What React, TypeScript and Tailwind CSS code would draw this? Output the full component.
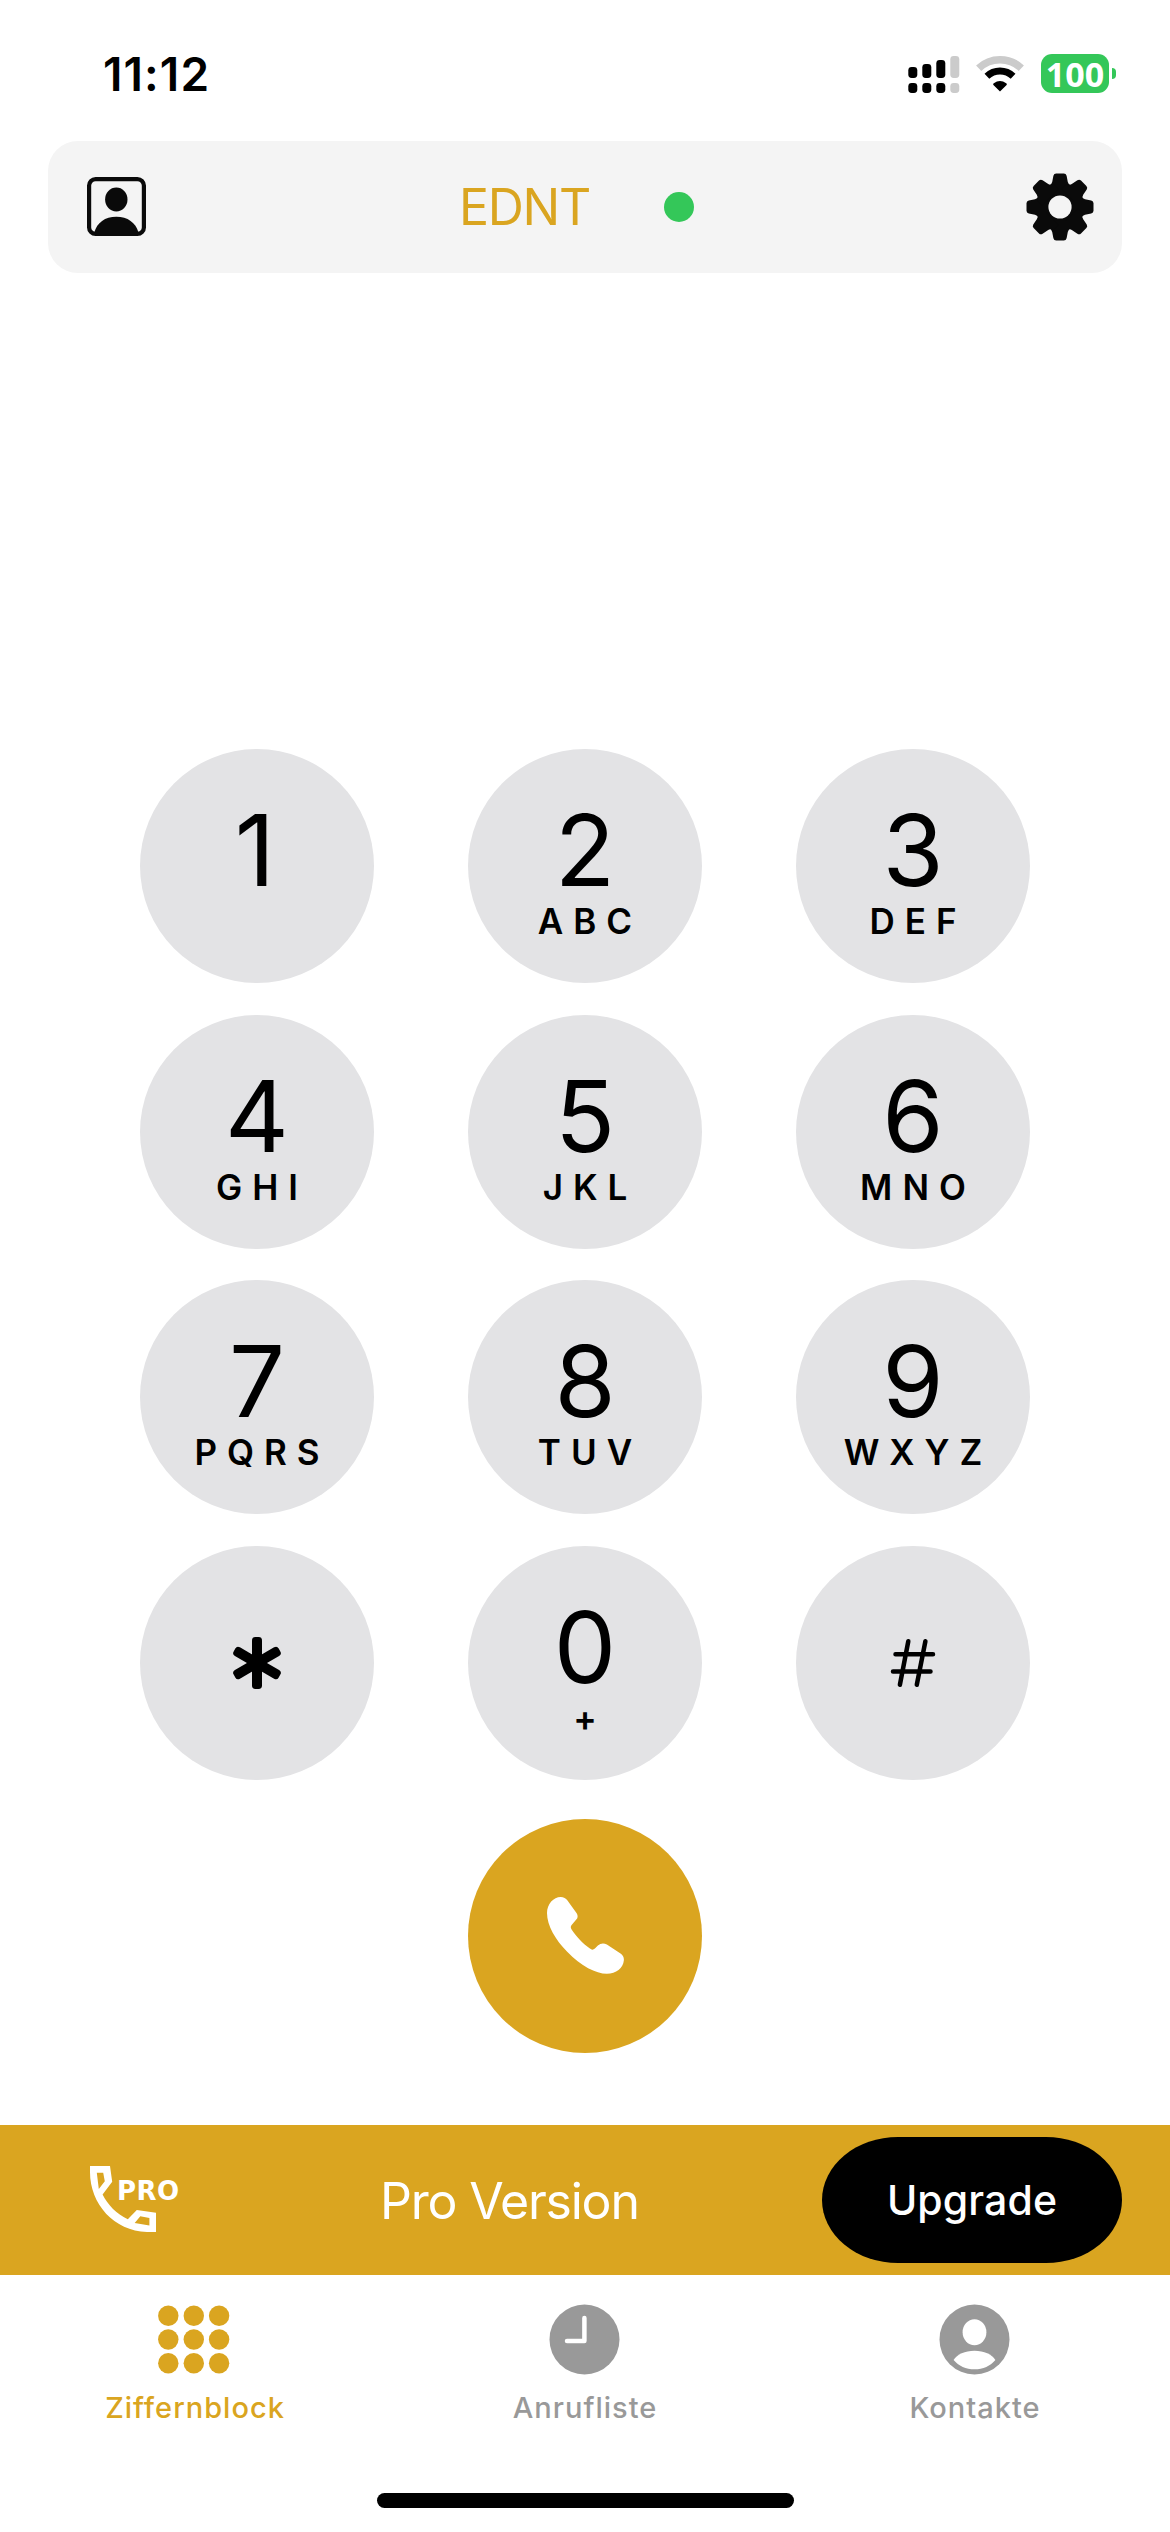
import clsx from "clsx";
import type { ReactNode } from "react";

const keys = [
  { digit: "1", letters: "" },
  { digit: "2", letters: "ABC" },
  { digit: "3", letters: "DEF" },
  { digit: "4", letters: "GHI" },
  { digit: "5", letters: "JKL" },
  { digit: "6", letters: "MNO" },
  { digit: "7", letters: "PQRS" },
  { digit: "8", letters: "TUV" },
  { digit: "9", letters: "WXYZ" },
  { digit: "*", letters: "" },
  { digit: "0", letters: "+" },
  { digit: "#", letters: "" },
];

function SignalIcon() {
  return (
    <svg className="h-[38px] w-[52px]" viewBox="0 0 52 38">
      <rect x="0.3" y="12" width="9" height="11" rx="3.4" />
      <rect x="14.3" y="9" width="9" height="14" rx="3.4" />
      <rect x="28.3" y="5" width="9" height="18" rx="3.4" />
      <rect x="42.3" y="1" width="9" height="22" rx="3.4" fill="#cbcbcb" />
      <rect x="0.3" y="28" width="9" height="10" rx="3.4" />
      <rect x="14.3" y="28" width="9" height="10" rx="3.4" />
      <rect x="28.3" y="28" width="9" height="10" rx="3.4" />
      <rect x="42.3" y="28" width="9" height="10" rx="3.4" fill="#cbcbcb" />
    </svg>
  );
}

function WifiIcon() {
  return (
    <svg className="h-[38px] w-[50px]" viewBox="0 0 50 38">
      <path d="M3.7 13.2A31 31 0 0 1 46.3 13.2" fill="none" stroke="#cbcbcb" strokeWidth="7.6" />
      <path d="M11.9 21.2A19.2 19.2 0 0 1 38.1 21.2" fill="none" stroke="#000" strokeWidth="7" />
      <path d="M25 36.6 18.4 30Q17.6 29 18.8 28.2A11 11 0 0 1 31.2 28.2Q32.4 29 31.6 30Z" />
    </svg>
  );
}

function StatusBar() {
  return (
    <div className="flex h-[141px] items-start justify-between pl-[103px] pr-[54px] pt-[54px]">
      <span className="text-[46px] font-semibold leading-[40px] tracking-[1.1px]">11:12</span>
      <div className="flex items-center">
        <SignalIcon />
        <div className="ml-[15px]">
          <WifiIcon />
        </div>
        <div className="ml-4 flex h-[39px] w-[68px] items-center justify-center rounded-[11px] bg-[#34c759] font-['Open_Sans',sans-serif] text-[34px] font-bold leading-none text-white">
          100
        </div>
        <div className="ml-[3px] h-[11px] w-1 rounded-r-full bg-[#34c759]" />
      </div>
    </div>
  );
}

function ContactCardIcon() {
  return (
    <svg className="mb-[2px] h-[59px] w-[59px]" viewBox="0 0 59 59" fill="#0a0a0a">
      <rect x="2.1" y="2.1" width="54.8" height="54.8" rx="6.5" fill="none" stroke="#0a0a0a" strokeWidth="4.2" />
      <ellipse cx="29.3" cy="22.5" rx="11.2" ry="11.9" />
      <path d="M7.3 55.5C10 45.5 18 39.7 29.3 39.7S48.7 45.5 51.5 55.5Z" />
    </svg>
  );
}

function GearIcon() {
  return (
    <svg className="h-[68px] w-[68px]" viewBox="-34 -34 68 68">
      <defs>
        <mask id="gear-hole">
          <rect x="-34" y="-34" width="68" height="68" fill="#fff" />
          <circle r="11.6" fill="#000" />
        </mask>
      </defs>
      <g fill="#0a0a0a" mask="url(#gear-hole)">
        <circle r="23.8" />
        {[0, 45, 90, 135, 180, 225, 270, 315].map((angle) => (
          <path
            key={angle}
            transform={`rotate(${angle})`}
            d="M-11.5-21Q-8.3-22.2-7.8-25L-6.6-31.2Q-6-33.5-3.8-33.5H3.8Q6-33.5 6.6-31.2L7.8-25Q8.3-22.2 11.5-21V-14H-11.5Z"
          />
        ))}
      </g>
    </svg>
  );
}

function Header() {
  return (
    <header className="mx-12 flex h-[132px] items-center rounded-[30px] bg-[#f4f4f4] pl-[39px] pr-7">
      <ContactCardIcon />
      <span className="ml-[313px] text-[50px] leading-none tracking-[-1.3px] text-[#daa520]">EDNT</span>
      <span className="ml-auto mr-[332px] h-[30px] w-[30px] rounded-full bg-[#34c759]" />
      <GearIcon />
    </header>
  );
}

function StarIcon() {
  return (
    <svg className="h-[54px] w-[54px]" viewBox="-27 -27 54 54">
      {[0, 60, 120].map((angle) => (
        <rect key={angle} x="-5" y="-26" width="10" height="52" rx="3.4" transform={`rotate(${angle})`} />
      ))}
    </svg>
  );
}

function HashIcon() {
  return (
    <svg
      className="h-[50px] w-[50px]"
      viewBox="0 0 50 50"
      fill="none"
      stroke="#000"
      strokeWidth="4.5"
      strokeLinecap="round"
    >
      <path d="M20.3 3.3 11.9 46.7M37.4 3.3 28.8 46.7M7.5 16.2H45M5 33.4H42.5" />
    </svg>
  );
}

function Key({ digit, letters }: { digit: string; letters: string }) {
  const symbol = digit === "*" || digit === "#";
  return (
    <button
      className={clsx(
        "flex h-[234px] w-[234px] flex-col items-center rounded-full bg-[#e3e3e5]",
        symbol ? "justify-center" : "pt-[52px]",
      )}
    >
      {digit === "*" && <StarIcon />}
      {digit === "#" && <HashIcon />}
      {!symbol && <span className={clsx("text-[99px] leading-none", digit === "1" && "pr-1")}>{digit}</span>}
      {letters && (
        <span className="mt-1 pl-[10px] text-[35px] font-semibold leading-none tracking-[10px]">{letters}</span>
      )}
    </button>
  );
}

function CallButton() {
  return (
    <button className="mx-auto mt-[39px] flex h-[234px] w-[234px] items-center justify-center rounded-full bg-[#daa520]">
      <svg className="h-[77px] w-[77px]" viewBox="258 260 231.5 231.5" fill="#fff">
        <path d="M299 260C308 260 315 264 319 270L345 306C351 314 352 321 346 328L334 342C329 348 328 352 332 358C345 378 365 400 386 414C392 419 396 420 402 415L411 406C419 399 428 397 438 403L479 430C487 436 490 442 489 451C487 474 466 491 438 491C405 491 361 468 318 424C284 389 258 346 258 308C258 281 278 260 299 260Z" />
      </svg>
    </button>
  );
}

function ProIcon() {
  return (
    <svg className="h-[67px] w-[92px]" viewBox="0 0 92 67" fill="#fff">
      <path
        fillRule="evenodd"
        d="M0 0H20L22.2 15.7 12.6 28.5C17.5 38.5 26.5 48 37.8 53.2L46.8 44 66 46.7V66H57C24 65 0 38 0 6ZM6.8 6.7 8.8 23 14.8 15.3 13.2 6.7ZM50.3 50.3 44.7 57 59.4 59.6V52Z"
      />
      <text x="27" y="33.500" fontSize="26" fontWeight="700" fontFamily="DejaVu Sans, sans-serif" textLength="62">
        PRO
      </text>
    </svg>
  );
}

function ProBanner() {
  return (
    <section className="mt-[72px] flex h-[150px] items-center bg-[#daa520] pl-[90px] pr-12 text-white">
      <ProIcon />
      <span className="ml-[198px] pt-[2px] text-[50px] leading-none tracking-[-1.2px]">Pro Version</span>
      <button className="ml-auto h-[126px] w-[300px] rounded-[76px/63px] bg-black pt-[2px] text-[41px] font-medium leading-none tracking-[0.1px]">
        Upgrade
      </button>
    </section>
  );
}

function KeypadIcon() {
  return (
    <svg className="h-[71px] w-[72px]" viewBox="0 0 72 71" fill="currentColor">
      {[11.7, 35.5, 59.2].map((cy) =>
        [10.3, 35.8, 61.1].map((cx) => <circle key={`${cx}-${cy}`} cx={cx} cy={cy} r="10.2" />),
      )}
    </svg>
  );
}

function ClockIcon() {
  return (
    <svg className="h-[71px] w-[71px]" viewBox="0 0 71 71">
      <circle cx="35.5" cy="35.5" r="35" fill="currentColor" />
      <path d="M35.4 14V36.9H18" fill="none" stroke="#fff" strokeWidth="4.5" strokeLinecap="round" strokeLinejoin="round" />
    </svg>
  );
}

function PersonIcon() {
  return (
    <svg className="h-[71px] w-[71px]" viewBox="0 0 71 71" fill="#fff">
      <circle cx="35.5" cy="35.5" r="35" fill="currentColor" />
      <ellipse cx="35.5" cy="28.3" rx="11.9" ry="13" />
      <path d="M14.6 56C18 50.5 26 46.8 35.5 46.8S53 50.5 56.4 56C51.5 62 44 65.3 35.5 65.3S19.5 62 14.6 56Z" />
    </svg>
  );
}

function Tab({ label, active, children }: { label: string; active?: boolean; children: ReactNode }) {
  return (
    <div className={clsx("flex flex-col items-center pt-[29px]", active ? "text-[#daa520]" : "text-[#999999]")}>
      <div className="-ml-[2px]">{children}</div>
      <span className="mt-[18px] text-[29px] font-medium leading-none tracking-[1px]">{label}</span>
    </div>
  );
}

export default function App() {
  return (
    <main className="flex h-[2532px] w-[1170px] flex-col overflow-hidden bg-white font-['Inter',sans-serif] text-black">
      <StatusBar />
      <Header />
      <div className="mx-auto mt-[476px] grid grid-cols-3 gap-x-[94px] gap-y-[31.67px]">
        {keys.map((key) => (
          <Key key={key.digit} {...key} />
        ))}
      </div>
      <CallButton />
      <ProBanner />
      <nav className="grid grid-cols-3">
        <Tab label="Ziffernblock" active>
          <KeypadIcon />
        </Tab>
        <Tab label="Anrufliste">
          <ClockIcon />
        </Tab>
        <Tab label="Kontakte">
          <PersonIcon />
        </Tab>
      </nav>
      <div className="mx-auto mb-6 mt-auto h-[15px] w-[417px] rounded-full bg-black" />
    </main>
  );
}
